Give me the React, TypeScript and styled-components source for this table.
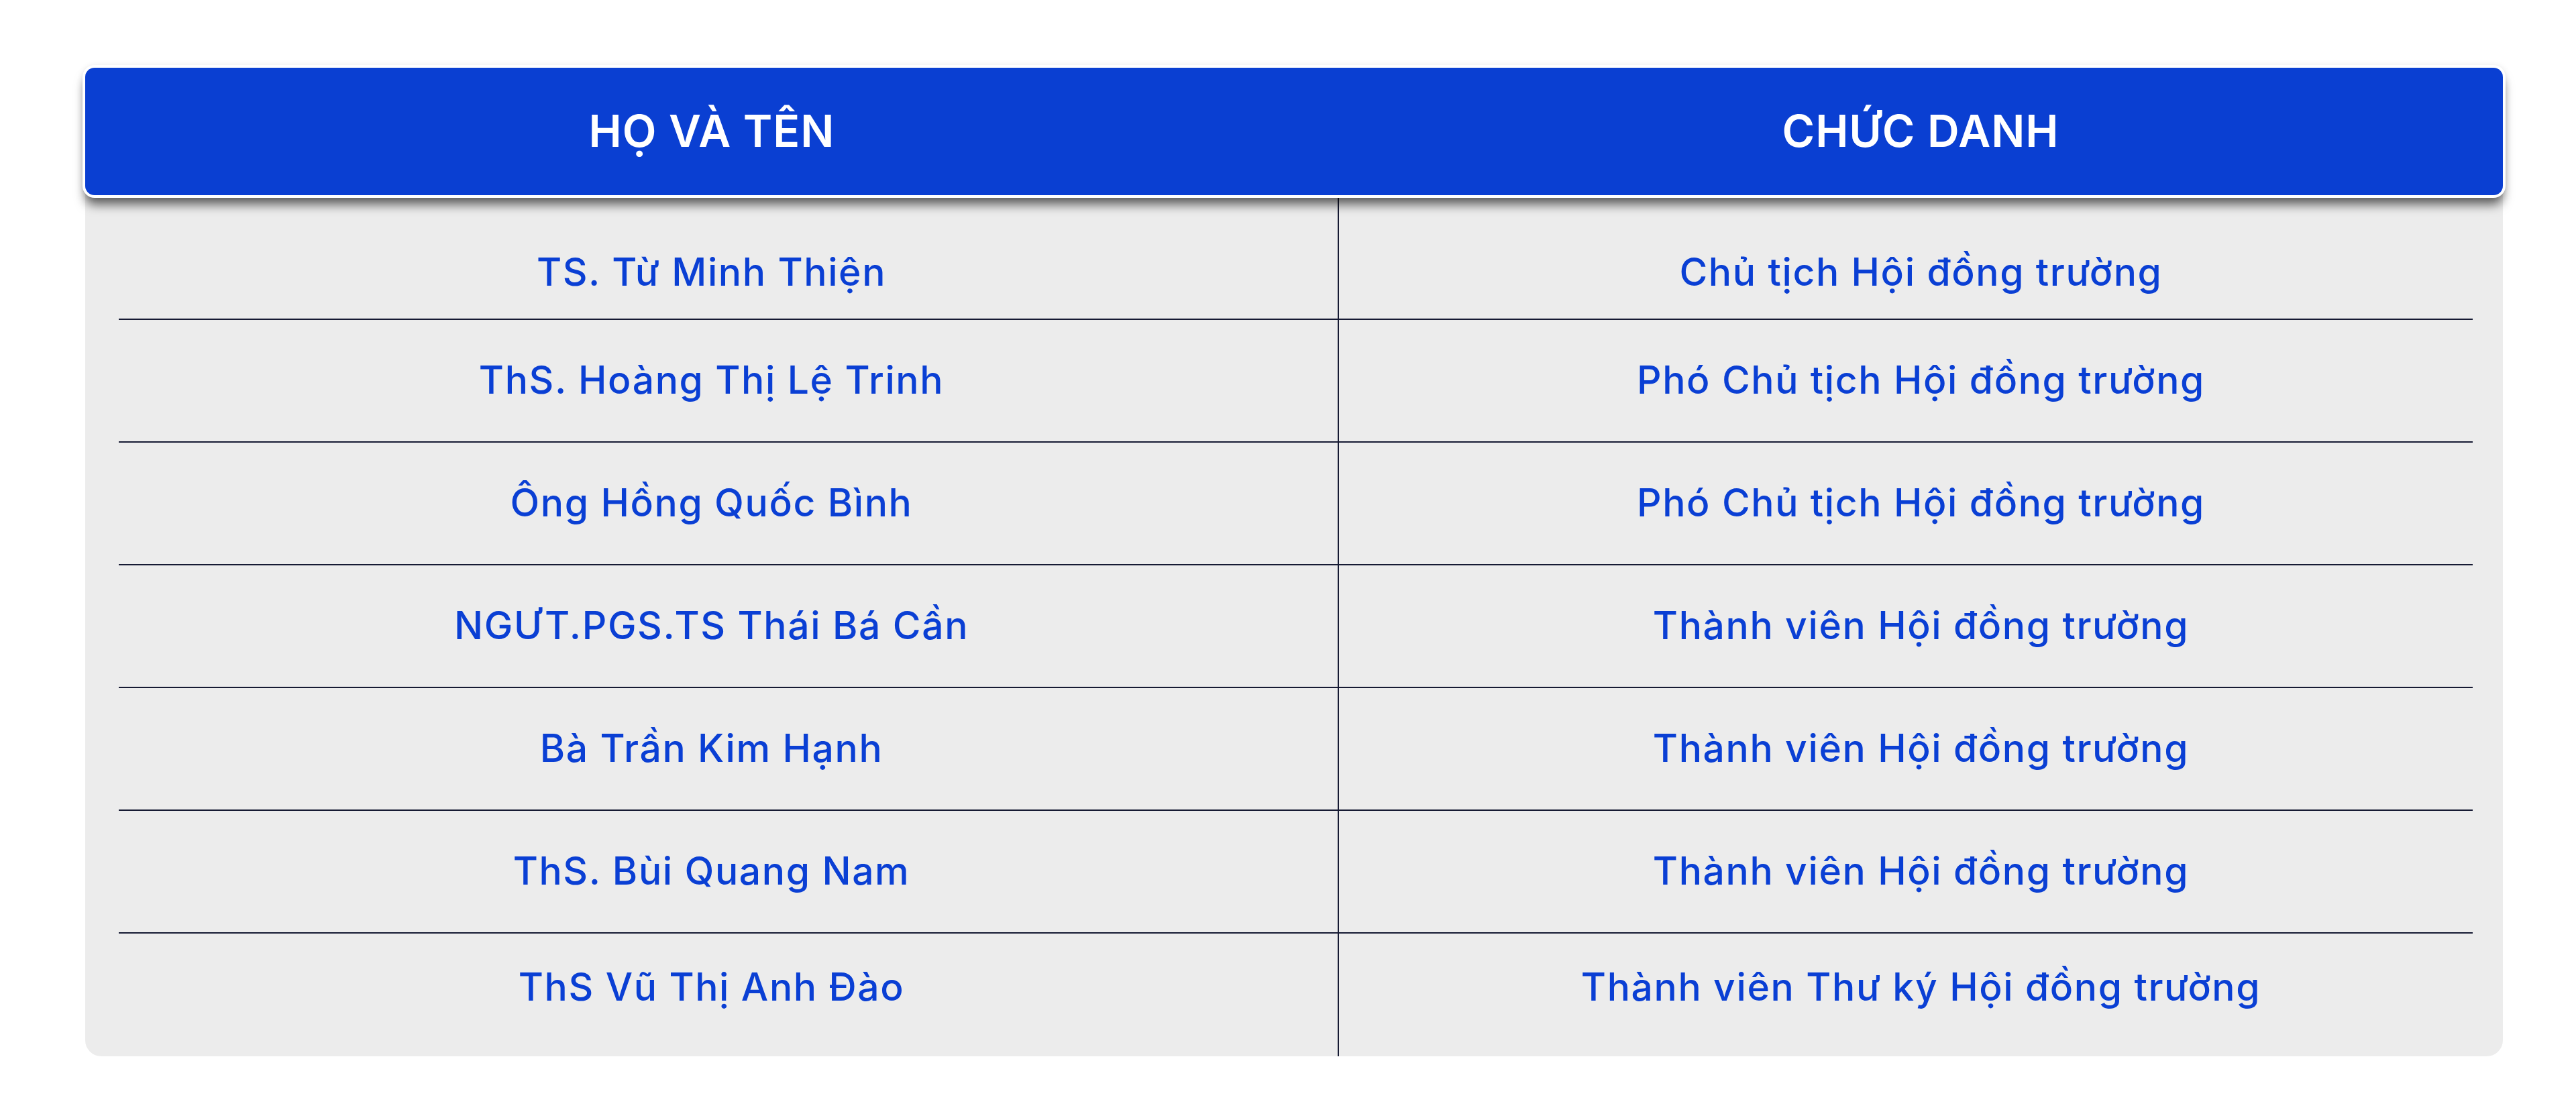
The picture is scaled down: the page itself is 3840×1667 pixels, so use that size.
import styled, { createGlobalStyle } from "styled-components";

const GlobalStyle = createGlobalStyle`
  html, body {
    margin: 0;
    padding: 0;
    background: #ffffff;
  }
  body {
    font-family: Inter, "Noto Sans", "Liberation Sans", sans-serif;
  }
`;

const members = [
  { name: "TS. Từ Minh Thiện", role: "Chủ tịch Hội đồng trường" },
  { name: "ThS. Hoàng Thị Lệ Trinh", role: "Phó Chủ tịch Hội đồng trường" },
  { name: "Ông Hồng Quốc Bình", role: "Phó Chủ tịch Hội đồng trường" },
  { name: "NGƯT.PGS.TS Thái Bá Cần", role: "Thành viên Hội đồng trường" },
  { name: "Bà Trần Kim Hạnh", role: "Thành viên Hội đồng trường" },
  { name: "ThS. Bùi Quang Nam", role: "Thành viên Hội đồng trường" },
  { name: "ThS Vũ Thị Anh Đào", role: "Thành viên Thư ký Hội đồng trường" },
];

function App() {
  return (
    <Page>
      <GlobalStyle />
      <Card>
        <HeadBar>
          <HeadCell>HỌ VÀ TÊN</HeadCell>
          <HeadCell>CHỨC DANH</HeadCell>
        </HeadBar>
        <Body>
          {members.map((m, i) => {
            const first = i === 0;
            const last = i === members.length - 1;
            return (
              <Row key={i} $last={last}>
                <NameCell $first={first} $last={last}>
                  {m.name}
                </NameCell>
                <RoleCell $first={first} $last={last}>
                  {m.role}
                </RoleCell>
              </Row>
            );
          })}
        </Body>
      </Card>
    </Page>
  );
}

const Page = styled.div`
  padding: 101px 109px 91px 127px;
  box-sizing: border-box;
  width: 3840px;
  min-height: 1667px;
  background: #ffffff;
`;

const Card = styled.div`
  width: 3604px;
  background: #ececec;
  border-radius: 24px;
  display: flex;
  flex-direction: column;
`;

const HeadBar = styled.div`
  position: relative;
  z-index: 1;
  height: 190px;
  display: grid;
  grid-template-columns: 1868px 1fr;
  align-items: center;
  background: #0a3fd2;
  border-radius: 14px;
  box-shadow: 0 0 0 4px #ffffff, 0 0 10px 4px rgba(0, 0, 0, 0.08),
    0 14px 16px 0 rgba(0, 0, 0, 0.6);
`;

const HeadCell = styled.div`
  text-align: center;
  color: #ffffff;
  font-family: Inter, "Noto Sans", sans-serif;
  font-weight: 600;
  font-size: 66px;
  letter-spacing: 1px;
  line-height: 1.21;
`;

const Body = styled.div`
  display: flex;
  flex-direction: column;
  padding-top: 3px;
`;

const Row = styled.div<{ $last: boolean }>`
  margin: 0 45px 0 50px;
  height: 183px;
  box-sizing: border-box;
  display: grid;
  grid-template-columns: 1819px 1fr;
  border-bottom: ${(p) => (p.$last ? "none" : "2px solid #161a33")};
`;

const Cell = styled.div<{ $first: boolean; $last: boolean }>`
  display: flex;
  align-items: center;
  justify-content: center;
  padding-top: ${(p) => (p.$first ? "44px" : "0")};
  padding-bottom: ${(p) => (p.$last ? "22px" : "0")};
  color: #0a3fd4;
  font-family: Inter, "Noto Sans", sans-serif;
  font-weight: 500;
  font-size: 57px;
  letter-spacing: 1.6px;
  line-height: 1.21;
  white-space: nowrap;
`;

const NameCell = styled(Cell)`
  padding-right: 50px;
  border-right: 2px solid #161a33;
`;

const RoleCell = styled(Cell)`
  padding-left: 45px;
`;

export default App;
